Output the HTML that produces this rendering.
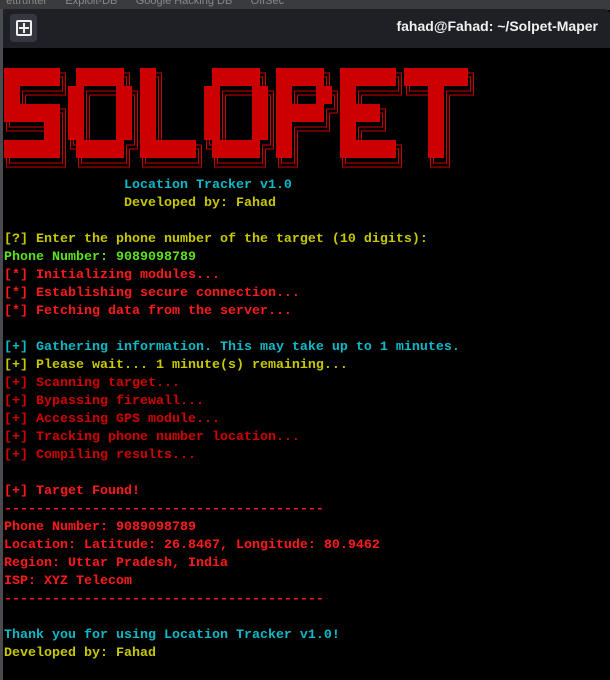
<!DOCTYPE html>
<html><head><meta charset="utf-8"><style>
*{margin:0;padding:0;box-sizing:border-box}
body{width:610px;height:680px;background:#000;overflow:hidden;position:relative;font-family:"Liberation Mono","DejaVu Sans Mono",monospace}
#top{position:absolute;left:0;top:0;width:610px;height:10px;background:#3b3b3e;color:#888;font:11px "Liberation Sans",sans-serif;line-height:2px;white-space:nowrap;overflow:hidden}
#bar{position:absolute;left:0;top:9px;width:610px;height:39px;background:#1f2025;border-radius:6px 6px 0 0}
#btn{position:absolute;left:10px;top:5px;width:27px;height:28px;background:#343640;border-radius:4px}
#btn i{position:absolute;left:6px;top:6px;width:16px;height:16px;border:2px solid #eee;border-radius:2px}
#btn i:before{content:"";position:absolute;left:5px;top:1px;width:2px;height:10px;background:#eee}
#btn i:after{content:"";position:absolute;left:1px;top:5px;width:10px;height:2px;background:#eee}
#title{position:absolute;right:12px;top:9px;color:#f0f0f0;font:bold 14px "Liberation Sans","DejaVu Sans",sans-serif}
#edge{position:absolute;left:0;top:9px;width:3px;height:671px;background:#4a4a50}
#term{position:absolute;left:3px;top:48px;width:607px;height:632px;background:#000}
pre{position:absolute;left:4px;top:177px;font:bold 13.33px/18px "Liberation Mono","DejaVu Sans Mono",monospace;margin:0}
.c{color:#0fb9c9}.y{color:#c8c800}.g{color:#5fe021}.r{color:#ff1a1a}.d{color:#d30000}
svg{position:absolute;left:0;top:0}
</style></head><body>
<div id="top">&nbsp;&nbsp;ettrunter &nbsp;&nbsp;&nbsp;&nbsp; Exploit-DB &nbsp;&nbsp;&nbsp;&nbsp; Google Hacking DB &nbsp;&nbsp;&nbsp;&nbsp; OffSec</div>
<div id="bar"><div id="btn"><i></i></div><div id="title">fahad@Fahad: ~/Solpet-Maper</div></div>
<div id="term"></div>
<div id="edge"></div>
<svg id="art" width="610" height="180" xmlns="http://www.w3.org/2000/svg"></svg>
<pre><span class="c">               Location Tracker v1.0</span>
<span class="y">               Developed by: Fahad</span>

<span class="y">[?] Enter the phone number of the target (10 digits):</span>
<span class="g">Phone Number: 9089098789</span>
<span class="r">[*] Initializing modules...</span>
<span class="r">[*] Establishing secure connection...</span>
<span class="r">[*] Fetching data from the server...</span>

<span class="c">[+] Gathering information. This may take up to 1 minutes.</span>
<span class="y">[+] Please wait... 1 minute(s) remaining...</span>
<span class="d">[+] Scanning target...</span>
<span class="d">[+] Bypassing firewall...</span>
<span class="d">[+] Accessing GPS module...</span>
<span class="d">[+] Tracking phone number location...</span>
<span class="d">[+] Compiling results...</span>

<span class="r">[+] Target Found!</span>
<span class="r">----------------------------------------</span>
<span class="r">Phone Number: 9089098789</span>
<span class="r">Location: Latitude: 26.8467, Longitude: 80.9462</span>
<span class="r">Region: Uttar Pradesh, India</span>
<span class="r">ISP: XYZ Telecom</span>
<span class="r">----------------------------------------</span>

<span class="c">Thank you for using Location Tracker v1.0!</span>
<span class="y">Developed by: Fahad</span></pre>
<script>
var A=[
"███████╗ ██████╗ ██╗      ██████╗ ██████╗ ███████╗████████╗",
"██╔════╝██╔═══██╗██║     ██╔═══██╗██╔══██╗██╔════╝╚══██╔══╝",
"███████╗██║   ██║██║     ██║   ██║██████╔╝█████╗     ██║   ",
"╚════██║██║   ██║██║     ██║   ██║██╔═══╝ ██╔══╝     ██║   ",
"███████║╚██████╔╝███████╗╚██████╔╝██║     ███████╗   ██║   ",
"╚══════╝ ╚═════╝ ╚══════╝ ╚═════╝ ╚═╝     ╚══════╝   ╚═╝   "];
var s="",C="#cc0000";
function R(x,y,w,h){s+='<rect x="'+x+'" y="'+y+'" width="'+w+'" height="'+h+'" fill="'+C+'"/>';}
function H(x1,x2,y){R(Math.min(x1,x2),y-0.5,Math.abs(x2-x1)+0.5,1);}
function V(x,y1,y2){R(x-0.5,Math.min(y1,y2),1,Math.abs(y2-y1)+0.5);}
for(var r=0;r<A.length;r++){var L=Array.from(A[r]);for(var c=0;c<L.length;c++){
var ch=L[c],x=4+c*8,y=68+r*18,cx=x+4,cy=y+7,o=1.5,h=2,X2=x+8,Y2=y+18;
if(ch=="█")R(x,y,8,18);
else if(ch=="═"){H(x,X2,cy-h);H(x,X2,cy+h);}
else if(ch=="║"){V(cx-o,y,Y2);V(cx+o,y,Y2);}
else if(ch=="╗"){H(x,cx+o,cy-h);V(cx+o,cy-h,Y2);H(x,cx-o,cy+h);V(cx-o,cy+h,Y2);}
else if(ch=="╝"){H(x,cx+o,cy+h);V(cx+o,y,cy+h);H(x,cx-o,cy-h);V(cx-o,y,cy-h);}
else if(ch=="╚"){V(cx-o,y,cy+h);H(cx-o,X2,cy+h);V(cx+o,y,cy-h);H(cx+o,X2,cy-h);}
else if(ch=="╔"){H(cx-o,X2,cy-h);V(cx-o,cy-h,Y2);H(cx+o,X2,cy+h);V(cx+o,cy+h,Y2);}
}}
document.getElementById("art").innerHTML=s;
</script>
</body></html>
